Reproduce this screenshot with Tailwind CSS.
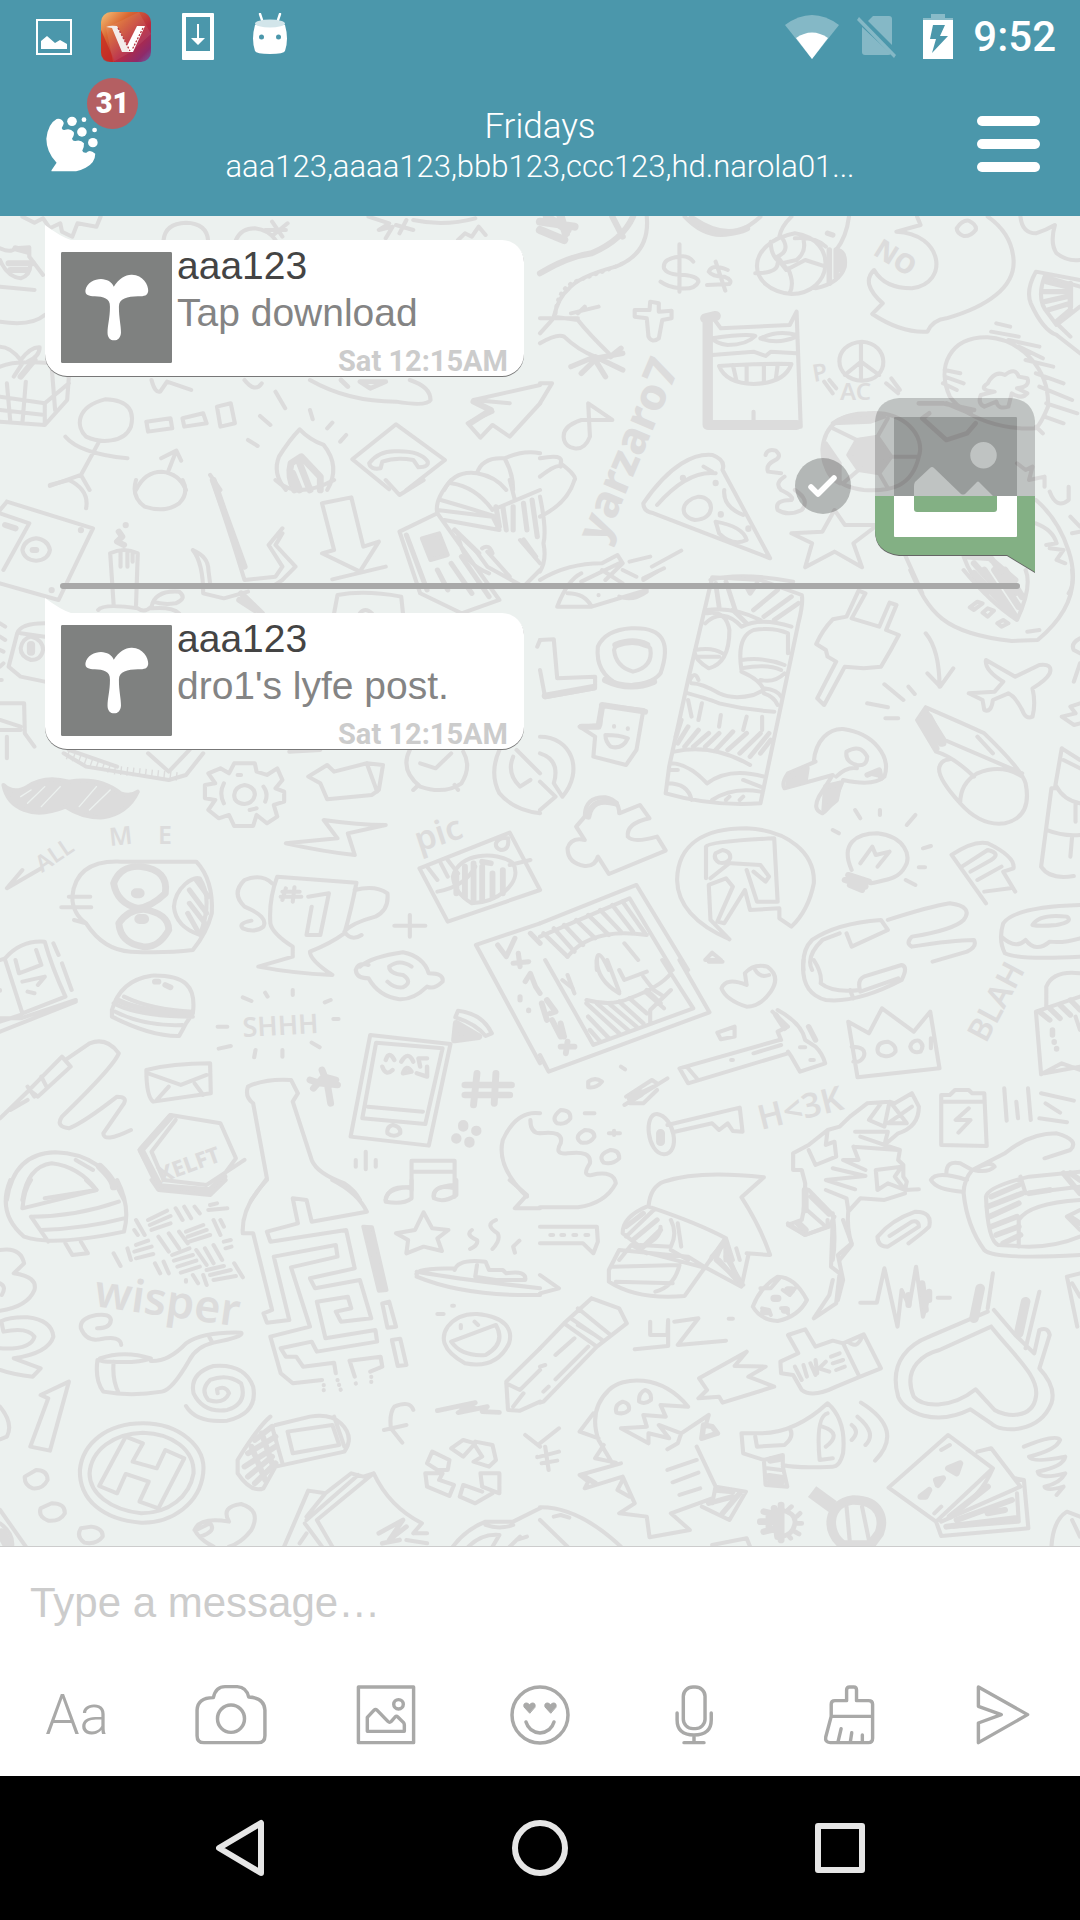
<!DOCTYPE html>
<html lang="en">
<head>
<meta charset="utf-8">
<meta name="viewport" content="width=device-width, initial-scale=1">
<title>Fridays</title>
<script src="https://cdn.jsdelivr.net/npm/@tailwindcss/browser@4"></script>
</head>
<body class="min-h-screen flex flex-col bg-[#ecf1ef] font-['Liberation_Sans',Arial,sans-serif]">

<header class="bg-[#4b97ab] text-white font-['Roboto',sans-serif]">
  <!-- status bar -->
  <div class="h-[72px] pt-0.5 flex items-center justify-between pl-9 pr-6">
    <div class="flex items-center">
      <svg class="w-9 h-9" viewBox="0 0 36 36"><path d="M1 1H35V35H1Z" fill="none" stroke="#fff" stroke-width="2"/><path d="M5 30V22L11 17L19 24L24 21L31 25V30Z" fill="#fff"/></svg>
      <svg class="ml-[29px] w-[50px] h-[50px]" viewBox="0 0 50 50">
        <defs><linearGradient id="vg" x1="0" y1="0" x2="1" y2="1"><stop offset="0" stop-color="#f6c478"/><stop offset=".3" stop-color="#d96732"/><stop offset=".62" stop-color="#b82a40"/><stop offset=".85" stop-color="#8e2a6a"/><stop offset="1" stop-color="#6a5fa5"/></linearGradient></defs>
        <rect width="50" height="50" rx="10" fill="url(#vg)"/>
        <path d="M0 18L14 50H10Q0 50 0 40Z" fill="#c5261e" opacity=".7"/><path d="M5 16L38 0L50 22L30 40L12 50Z" fill="#fff" opacity=".08"/>
        <path d="M5 15Q9 13 16 14L28 36L31 40H21L11 16Z" fill="#f3ecea"/><path d="M36 14H44L32 40H28L26 34Z" fill="#fff"/>
        <path d="M17 16L29 39M42 16L31 38" stroke="#b5343c" stroke-width="1.3" stroke-dasharray="2 1.5"/>
      </svg>
      <svg class="ml-[31px] w-8 h-12" viewBox="0 0 32 48"><path fill-rule="evenodd" d="M1 0H31Q32 0 32 1V46Q32 47 31 47H1Q0 47 0 46V1Q0 0 1 0ZM4 4V38H28V4Z" fill="#fff"/><path d="M15 11H17V25H23L16 32L9 25H15Z" fill="#fff"/></svg>
      <svg class="ml-[39px] mb-1.5 w-[34px] h-[42px]" viewBox="0 0 34 42"><path d="M7 1L10 10M27 1L24 10" stroke="#fff" stroke-width="2.4" stroke-linecap="round"/><path d="M2 12Q3 11 6 11Q17 16 28 11Q31 11 32 12Q36 26 32 38Q31 41 17 41Q3 41 2 38Q-2 26 2 12Z" fill="#fff"/><ellipse cx="17" cy="10.500" rx="15" ry="4" fill="#d2e5ea"/><circle cx="8.500" cy="24" r="2.500" fill="#4b97ab"/><circle cx="25.500" cy="24" r="2.500" fill="#4b97ab"/></svg>
    </div>
    <div class="flex items-center">
      <svg class="w-[54px] h-11" viewBox="0 0 54 44"><path d="M0 10Q27 -10 54 10L27 44Z" fill="#fff" opacity=".32"/><path d="M11 23Q27 12 43 23L27 44Z" fill="#fff"/></svg>
      <svg class="ml-[18px] w-10 h-11" viewBox="0 0 40 44"><g fill="#fff" opacity=".32"><path d="M11 6L16 1H32Q35 1 35 4V30Z"/><path d="M5 12L34 39Q33 40 31 40H8Q5 40 5 37Z"/><path d="M0 5L2 2L39 40L37 43Z"/></g></svg>
      <svg class="ml-[26px] w-[30px] h-[46px]" viewBox="0 0 30 46"><path d="M8 0H22V4H30V7H0V4H8Z" fill="#fff" opacity=".35"/><path fill-rule="evenodd" d="M0 6H30V45H0ZM10 11L7 25H13L9 39L25 22H17L22 11Z" fill="#fff"/></svg>
      <span class="ml-5 text-[42px] leading-none font-medium">9:52</span>
    </div>
  </div>
  <!-- conversation bar -->
  <div class="h-36 flex items-center justify-between pl-[46px] pr-10">
    <a href="#" aria-label="Home, 31 unread" class="relative block w-[57px]">
      <svg class="w-[52px] h-14" viewBox="134 352 152 168" preserveAspectRatio="none"><path fill="#fff" d="M150 515L165 492Q135 460 135 420Q140 375 165 361Q180 358 186 373Q185 380 180 388Q182 396 190 393Q205 388 215 400Q218 408 210 420Q212 428 220 427Q235 422 245 434Q246 445 240 456Q243 464 252 462Q262 450 278 465Q278 492 250 507Q235 515 222 518H150Z"/><g fill="#fff"><circle cx="210" cy="368" r="14"/><circle cx="245" cy="363" r="7"/><circle cx="239" cy="400" r="14"/><circle cx="276" cy="394" r="7"/><circle cx="271" cy="432" r="14"/></g></svg>
      <span class="absolute left-[41px] -top-[38px] size-[51px] rounded-full bg-[#b45f62] flex items-center justify-center text-[29px] leading-none font-black">31</span>
    </a>
    <div class="flex-1 min-w-0 pt-1.5 text-center font-light">
      <h1 class="text-[35px] leading-10 font-light">Fridays</h1>
      <p class="text-[31px] leading-10 truncate">aaa123,aaaa123,bbb123,ccc123,hd.narola01...</p>
    </div>
    <button type="button" aria-label="Menu" class="w-[63px] flex flex-col gap-[13px]">
      <span class="h-2.5 rounded-full bg-white"></span><span class="h-2.5 rounded-full bg-white"></span><span class="h-2.5 rounded-full bg-white"></span>
    </button>
  </div>
</header>

<main class="relative flex-1 overflow-hidden">
  <!-- doodle wallpaper -->
  <svg class="absolute inset-0 w-full h-full" viewBox="0 216 1080 1330" preserveAspectRatio="xMidYMin slice" fill="none" stroke="#dcdcdc" stroke-width="12" stroke-linecap="round" stroke-linejoin="round" aria-hidden="true">
    <g transform="translate(0 210) scale(.3444 .3333)">
      <path d="M65 20L100 38L125 25L145 55L175 40L180 65L210 80L225 40L280 50L292 20M475 90Q480 40 540 38Q600 40 604 90M685 90Q700 55 740 55Q780 60 800 90M790 35L820 80M835 40L790 78M770 60H830M1070 20L1130 40L1100 60L1140 50L1120 85M1150 45L1200 60M1160 70L1180 30M1200 30Q1290 50 1380 25M1330 90L1350 70L1370 80L1390 50L1410 75"/>
      <path d="M0 115Q30 130 45 115L85 112V140L125 195M0 150Q20 200 60 205Q90 195 88 160M0 230L100 240M0 335Q90 350 130 315M0 410Q30 410 60 450Q90 410 115 412Q115 440 80 455M0 470Q40 450 150 460L200 500L195 570L130 645L0 635M20 520L30 635M75 515L65 640M0 560L130 580L200 520M0 600L130 615M150 470L160 600M65 460L40 500M130 580V645"/>
      <path d="M25 160H95M45 115L80 125M30 180H80M100 450L60 500" stroke-width="18"/>
      <path d="M305 568C380 570 390 610 380 650C360 700 290 700 250 680C220 650 220 590 305 568ZM285 700L235 795L145 828M190 680Q230 730 370 745M235 795L260 840M425 635L495 625L500 655L430 665ZM530 625L590 610L600 640L535 650ZM630 590L670 580L682 640L640 650ZM440 510Q450 550 465 545L485 515L555 540M710 510Q740 550 760 520M900 510Q1010 575 1150 575Q1240 590 1250 570Q1250 530 1190 510M800 545L828 595M755 618L785 645M900 600L908 628M965 638L950 655M1005 675L988 695M720 690L748 708"/>
      <path d="M1045 515H1120L1075 535Z M990 510L1010 530" stroke-width="14"/>
      <path d="M830 840Q790 790 810 740Q840 690 870 658Q900 690 940 705Q990 770 950 840M1023 748L1150 643L1292 750L1180 840M1023 748L1130 838M1072 760Q1100 722 1150 724Q1220 722 1242 755Q1245 772 1215 772L1200 750Q1150 740 1110 755L1105 775Q1075 780 1072 760Z"/>
      <path d="M855 840Q835 800 845 760L875 740L930 800V840M870 760L900 840M850 790L870 840" stroke-width="20"/>
      <path d="M395 840Q420 785 470 785Q520 790 540 840M490 780L512 722L468 745M512 722L526 752M610 795L640 840M1568 525L1375 570L1430 605L1358 640L1395 683L1430 645L1480 680L1568 580M1375 570L1480 580M1290 840Q1320 780 1385 790Q1400 740 1465 745Q1520 720 1568 730M1385 790Q1440 800 1470 840M1465 745Q1490 790 1490 840"/>
      <path d="M1375 575L1425 600L1365 640" stroke-width="18"/>
    </g>
    <g transform="translate(540 210) scale(.3444 .3333)">
      <path d="M0 60L70 90M0 35L100 50M20 20L80 60M60 20L75 70" stroke-width="24"/><path d="M0 190Q80 140 150 130Q240 90 270 20M210 20L240 80" stroke-width="18"/>
      <path d="M310 20Q320 130 220 170Q110 200 80 240Q55 260 40 320L110 330Q140 370 200 430M0 325H110M0 400Q50 370 70 380Q110 420 160 440M0 370L35 330M90 310L170 290M130 290L110 310"/>
      <path d="M45 310Q50 240 100 215Q200 180 240 160" stroke-dasharray="2 18"/>
      <path d="M90 470L160 440L240 480M120 490L160 450L190 500M205 440L235 415M160 445L240 430" stroke-width="16"/>
      <path d="M445 155Q430 135 405 140Q355 145 360 175Q370 195 420 195Q460 200 460 215Q450 240 405 235Q370 230 350 215M405 103V245M545 180Q500 160 490 185Q500 200 535 200Q560 210 550 222L485 225M510 155L538 242"/>
      <path d="M420 20Q520 130 640 20" /><path d="M440 25Q530 90 600 55" stroke-width="20"/>
      <path d="M740 70C870 90 850 250 730 252C600 240 590 100 740 70ZM700 80Q730 120 690 140L715 175M760 75Q780 120 745 150L700 160L715 180L770 150L830 170M670 95Q670 140 700 160M690 160Q690 190 625 190M720 175Q740 220 725 250M740 85Q800 80 830 110M695 80Q700 50 730 20M897 20Q890 80 860 120Q890 120 885 170Q870 220 800 235"/>
      <path d="M840 120V220M860 120V200M875 130V180M835 70L850 75" stroke-width="16"/>
      <path d="M320 275L345 280V305L382 302V325L355 330L345 385Q325 400 315 380L310 325L275 320V300L318 300Z"/>
      <path d="M500 320L525 355L725 345L745 305L757 650M500 385Q600 370 625 378Q600 405 545 405Q510 400 500 385ZM640 385Q690 360 745 375M640 385Q690 405 745 380M500 435L620 425L655 438L670 425L745 430M520 468Q640 460 730 462Q710 520 620 522Q540 520 520 468ZM560 465L570 510M600 465V518M650 465V518M690 465L685 505M620 605V645"/>
      <path d="M487 330V645H745M480 325L510 318" stroke-width="30"/>
      <path d="M935 395C1015 400 1020 510 935 512C850 510 845 400 935 395ZM932 400V510M932 455L885 495M932 455L985 495M825 515L850 550M840 510L860 535M1005 520L1040 550M1020 505L1045 540"/>
      <path d="M1035 65L1105 45L1095 20M1035 65C1170 70 1190 220 1080 235Q1000 235 970 180Q930 220 995 280L965 312Q1050 370 1125 365Q1140 330 1180 325C1300 290 1380 230 1375 150Q1370 70 1300 20M1210 55Q1225 30 1245 32Q1270 45 1265 60Q1250 80 1230 78Q1210 70 1210 55ZM1395 20Q1400 70 1440 70Q1470 60 1495 45Q1480 100 1500 130Q1530 155 1568 150M1568 210L1440 185Q1410 240 1425 280Q1460 360 1500 375M1568 230L1465 200Q1440 270 1475 310L1500 345L1568 290M1500 375L1568 430M1505 345L1540 380"/>
      <path d="M1470 215L1530 230M1460 245H1530M1465 275L1530 260M1475 300L1540 280M1500 335L1540 300M1540 220V290" stroke-width="16"/>
      <path d="M1190 560C1150 470 1190 380 1300 382C1400 390 1480 480 1475 590Q1455 640 1440 655C1350 660 1240 630 1190 560ZM1310 365L1390 380M1325 340L1365 350M1360 390L1450 410M1390 410L1460 445M1410 450L1490 470M1440 490L1520 520M1450 530L1545 570M1470 580L1560 610M1465 620L1520 640M1440 650L1460 670M1175 480L1220 490M1175 500L1230 520M1170 520L1210 540M1300 520Q1320 480 1350 495Q1380 470 1390 500L1415 505Q1425 530 1385 535L1415 550Q1400 570 1370 550L1360 590Q1330 600 1325 575L1290 590Q1270 580 1280 555L1320 545Q1270 540 1300 520Z"/>
      <path d="M1100 580H1170L1260 600M1130 610L1110 625L1180 690L1240 670L1265 640M1180 580L1250 610" stroke-width="14"/>
      <path d="M70 690Q60 650 120 630L210 630L140 580L145 680Q130 720 100 715Q75 710 70 690ZM0 520L35 520L0 580"/>
      <path d="M0 745Q70 730 60 760Q110 800 100 810Q80 880 0 920M0 800Q50 760 60 770M0 860Q20 960 10 1000Q20 1050 0 1085"/>
      <path d="M300 880C380 760 450 730 500 735Q540 750 530 780L668 1045L330 910Q300 905 300 880ZM340 885Q430 780 510 790M460 860C510 860 510 930 450 930C400 920 410 870 460 860ZM535 840Q530 890 590 915M510 935Q590 950 600 990Q560 1010 520 970ZM475 770L500 785M655 735Q660 715 685 722Q705 740 680 752Q655 765 662 785L700 790M710 800Q680 820 700 840Q740 860 730 870Q680 870 690 900Q720 920 760 900Q785 870 740 840"/>
      <path d="M415 803V805M510 818V820M525 912V914M605 955V957" stroke-width="18"/>
      <path d="M950 610C1060 600 1120 680 1100 740C1080 830 1020 845 940 840C850 830 820 770 820 720C825 640 880 610 950 610ZM920 690L980 680L1020 740L985 790L925 780L895 735ZM1020 740H1100M980 680L1010 625M985 790L1010 835M920 690L850 655M925 780L880 820"/><path d="M925 690L975 685L1010 740L980 785L930 775L900 735ZM850 640Q900 600 1000 620L960 635Z M825 740Q830 800 870 820V760L830 700Z" fill="#dcdcdc"/>
      <path d="M855 900L885 945H980L910 1000L935 1072L855 1025L770 1072L790 1000L730 970L820 965ZM0 1110Q80 1060 180 1060L225 1035L240 1060L190 1110M230 1060L120 1115M260 1055L320 1040M325 1070L410 1022M300 1105L360 1075M495 1110Q580 1085 735 1115M1060 1035L1110 1150M1230 1040Q1250 1100 1300 1150M1440 870C1530 950 1570 1100 1535 1150M1440 940Q1490 960 1500 1000L1470 1005M1480 1015L1520 1020L1500 1050L1525 1060M1385 760L1410 780L1430 770L1420 810L1465 800V830M1480 845Q1500 900 1535 870V830M1540 920L1568 950M1545 970L1568 965"/>
      <path d="M1240 1040L1310 1045L1380 1150M1260 1060L1330 1140M1300 1040L1380 1110" stroke-width="18"/>
    </g>
    <g transform="translate(0 480) scale(.3444 .3333)">
      <path d="M145 15L200 0Q260 30 250 85M395 0Q380 50 420 80Q480 100 520 70Q550 40 530 0M20 65L270 145L170 360L0 310M20 65L0 90M85 130L10 270M0 100L85 130M105 175Q140 180 145 210Q140 240 105 242Q70 240 65 210Q70 180 105 175ZM320 220Q360 200 400 220L395 375M320 220L330 375M350 215V260M370 215V260M385 220V245M285 390Q300 370 400 385Q420 400 440 380Q450 330 520 335Q545 355 510 370Q470 375 445 365M440 385Q500 380 520 400M615 0Q660 130 710 300L800 290L820 260L780 195L820 145M820 160L800 195L858 260L820 300L790 320M560 210Q605 230 605 270L610 310M560 210Q590 250 590 340L650 355L720 335M800 0Q860 60 970 0M1120 0L1160 45L1230 0"/>
      <path d="M620 0L650 90L710 260" stroke-width="18"/><path d="M345 155L355 170L340 185L360 195M365 135V136M15 135L45 145M95 210H105M700 340L760 400M695 360L740 390M150 330V331M235 150V151" stroke-width="18"/>
      <path d="M935 70L1020 52L1055 200L1100 185L1045 275L935 220L970 210ZM965 298L1120 260M970 400L980 345Q1060 330 1165 350L1170 400M1045 400Q1060 380 1080 400M1310 0Q1260 60 1270 100L1160 155L1220 340L1340 400L1450 360L1270 100M1270 90L1430 110L1450 150L1290 120M1310 10Q1380 20 1430 90L1568 30M1280 60Q1380 90 1440 110M1480 0L1495 60M1380 210L1415 260L1520 320L1568 270M1415 215L1480 290M1400 205Q1420 190 1430 220M1510 180L1568 250M1330 160Q1340 250 1420 280"/>
      <path d="M1225 175L1275 160L1300 225L1250 240Z" fill="#dcdcdc"/>
      <path d="M1440 80L1450 140M1460 80L1470 150M1490 80V150M1520 70L1530 150M1545 60L1560 170M1320 150L1390 220M1180 165L1240 330M1270 270L1300 330M1310 250L1370 340M1340 230L1420 350M1520 180L1555 230" stroke-width="15"/>
      <path d="M130 430Q60 430 50 460L25 560L60 590L130 605M60 460L130 470M90 470Q125 480 125 510Q120 540 90 540Q60 530 60 505Q65 475 90 470ZM0 430L15 440M0 470L15 480M0 510L10 515M0 560L10 550M0 600H5M0 670H70L72 760L100 800M0 750H60M20 770V835M0 720L60 740"/><path d="M90 495V515" stroke-width="24"/>
      <path d="M185 820L250 860L340 875L490 900L540 885L590 820M200 810L340 860M430 820L490 875L550 810" /><path d="M195 825L330 870L520 890" stroke-width="26" stroke-dasharray="4 14" stroke-linecap="butt"/>
      <path d="M10 915Q40 945 80 920Q130 885 200 905Q290 890 350 940Q380 950 400 935Q370 1000 300 1012Q240 1015 190 980Q120 1010 70 990Q20 970 10 915Z" fill="#dcdcdc"/>
      <path d="M60 950L90 930M80 970L130 920M120 980L175 920M230 980L280 920M260 990L320 930" stroke="#ecf1ef" stroke-width="4"/>
      <path d="M680 850H740L745 875L775 885L805 865L820 900L800 925L825 935V965L795 975L805 1010L775 1030L745 1005L735 1038H680L665 1005L635 1015L605 990L625 960L595 955V915L625 910L605 880L640 865L665 880ZM710 915Q740 920 740 945Q735 970 710 972Q680 970 680 945Q682 920 710 915ZM650 910Q635 940 650 970M765 920Q780 940 770 965M725 990L745 985M690 885H700"/>
      <path d="M895 890L950 855L970 875L1065 850L1112 855L1100 930L1080 945L950 958L930 910ZM1065 850L1095 935M840 815L930 810M1190 810Q1160 870 1220 920Q1290 945 1340 910Q1370 860 1345 815M1220 850L1265 865L1310 820M1215 915L1200 930M1320 915L1330 930M1450 810Q1420 880 1450 940Q1490 990 1568 1000M1490 830Q1470 880 1510 920L1540 900M1500 810L1568 880M1568 480L1560 500"/>
    </g>
    <g transform="translate(540 570) scale(.3444 .3333)">
      <path d="M50 110Q80 30 120 10M50 110H150L310 60M80 70Q130 70 150 110M230 80Q270 95 310 65M180 0L240 40M240 0L280 20M300 30L340 5M170 75V76M0 210L40 208L50 325L160 320V355L15 382L0 300M265 175C360 170 380 220 350 310Q320 350 230 345Q160 310 168 230Q190 180 265 175ZM215 240C220 210 300 205 320 235Q330 290 270 305Q220 290 215 240Z"/>
      <path d="M15 378L155 352M190 330Q260 365 330 335M220 225Q270 205 310 225" stroke-width="20"/>
      <path d="M180 405L300 420L280 540L250 585L155 560L160 500L115 470L175 465ZM190 495Q230 495 255 505Q240 540 205 530Q190 515 190 495ZM215 468V470M255 475V477"/><path d="M180 405L305 425M120 470H170L180 410" stroke-width="18"/>
      <path d="M500 22L640 30L760 75Q765 100 750 160L640 700Q500 710 365 670L375 590L430 330ZM485 130Q540 120 550 180Q550 280 490 295Q450 270 450 250M450 240Q500 230 530 250M455 260H520M585 300Q570 200 620 180Q680 170 720 190V250M585 270Q650 260 710 285M585 295Q660 280 700 300M585 305Q640 330 650 360L620 375Q560 390 520 370Q470 340 440 340M435 330Q450 300 460 330M480 160Q530 110 585 170Q640 140 730 170M485 120Q560 110 640 150M430 370Q500 390 520 400Q600 420 680 425M650 355Q690 360 700 380M640 330Q680 340 710 310M650 370Q680 380 690 405M430 390L440 440M470 400L460 450M525 435L520 470M600 440L590 480M645 440V480M390 545Q500 520 610 585M380 580Q430 580 485 640Q550 590 650 620M380 600H400M370 640Q430 640 440 690M500 690Q560 650 640 665M590 630L640 650M540 690L550 680M580 690L590 680"/>
      <path d="M400 520L430 470M420 530L460 480M445 530L490 490M480 530L520 490M510 540L560 485M545 540L600 490M580 550L640 490M610 560L665 490M640 550L670 510M510 40L520 110M540 35L570 130M560 120L600 160M620 120L690 60M650 140L730 80M680 150L750 100M600 50L610 70L630 40M395 500L410 450" stroke-width="14"/>
      <path d="M890 140L925 62L945 70L905 145L985 170L1015 98L1035 105L1005 180L1042 195Q1020 240 990 290L940 295L885 290L825 405L805 385L860 275L835 260L830 240L802 222Q820 180 850 148ZM1120 190Q1160 240 1160 350M1125 310L1162 350L1200 295M1075 0C1130 130 1170 190 1370 213L1445 210Q1560 110 1545 0M1230 0Q1310 100 1385 150Q1430 50 1410 0M1270 95L1285 100L1260 120L1248 112ZM1300 115L1318 122L1300 140L1285 128ZM1345 150L1360 160L1340 170L1328 160ZM1415 185L1450 180"/>
      <path d="M1290 0L1380 140M1320 0L1390 110M1350 0L1400 80M1260 10L1370 130" stroke-width="20"/>
      <path d="M1295 270L1380 320L1450 285Q1490 280 1480 310Q1470 330 1430 355Q1440 400 1430 440Q1410 450 1400 420Q1380 380 1360 370L1315 390Q1310 430 1290 420L1285 390L1245 370L1320 365L1345 335Q1290 300 1295 270ZM1568 205Q1540 220 1550 240L1568 250M1550 335L1568 280M1000 343L1055 390M1070 350L1088 372M950 400L1010 412M1003 445H1040M1568 400L1540 410L1555 430L1515 440L1550 465L1568 460M1120 412L1095 450L1150 545Q1200 560 1260 620M1120 412Q1250 470 1290 490Q1400 600 1410 640Q1430 740 1350 760Q1280 770 1220 700Q1150 620 1160 590Q1165 570 1190 568M1120 420L1175 510L1400 610M1270 500L1315 550M1220 700Q1220 640 1270 610Q1340 580 1400 620"/>
      <path d="M1115 430L1165 520M1105 450L1150 535M1130 440L1170 520" stroke-width="20"/>
      <path d="M795 575C800 510 840 475 880 477C970 490 1020 560 1000 620Q970 650 880 630Q850 710 820 730Q790 720 810 680L850 615L710 655Q700 640 720 610L800 575M890 545Q930 520 950 560Q950 590 920 585Q885 575 890 545ZM860 620Q890 590 920 595M0 500C90 500 130 600 65 680L40 640Q60 570 0 550M0 720L45 680L0 635"/>
      <path d="M725 620L775 595L770 630L720 645ZM830 650L870 640L860 690L825 720ZM950 615L985 600L990 625" stroke-width="16" fill="#dcdcdc"/>
      <path d="M130 740Q130 680 190 682Q230 690 230 730L290 705L318 745Q250 760 255 800Q270 820 340 800L365 842L200 912L168 860Q160 890 130 888Q80 880 80 835Q90 800 130 810L105 770Z"/><path d="M140 740Q150 680 220 700" stroke-width="18"/>
      <path d="M550 1108Q400 1040 398 930C400 820 480 775 600 775C720 780 800 850 795 940Q780 1020 730 1070L695 1045V1015L610 1020L595 960L535 1060L515 1055L560 950L540 925L490 945L495 1050L550 1108M482 925V830Q490 815 680 805L690 995L630 995L600 900M555 880L640 885L665 920L655 935L620 905M530 840Q555 845 552 865Q545 882 520 878Q502 865 510 850Z M495 925L550 880"/>
      <path d="M905 900C870 820 920 790 980 790C1060 800 1080 860 1060 890C1040 930 1000 930 960 940M930 880L965 830L975 855L1015 845L980 890M915 720L930 745M987 720V735M1090 735L1065 765M1135 828L1112 835M1100 892H1118M1062 930L1090 945M850 780L868 790"/><path d="M895 915L955 935M885 930L945 950M900 945L935 960" stroke-width="18"/>
      <path d="M1195 855Q1260 810 1300 820Q1380 860 1375 895L1345 905L1380 965M1195 855L1295 1000M1225 890L1300 840Q1340 850 1310 870L1250 905M1270 930L1340 890M1290 965L1365 955M1515 535L1495 655L1485 655L1455 890Q1480 930 1550 918M1515 535L1568 570M1520 570L1568 595M1500 650Q1520 690 1568 700M1470 780Q1520 800 1568 795M1555 700V755M1545 800L1540 860M0 1060L280 945L430 1200M0 1100L260 985L385 1200M80 1160Q150 1070 310 1095M165 1200Q160 1110 200 1200M245 1120L285 1170"/>
      <path d="M10 1090L80 1160M40 1075L100 1145M70 1065L125 1125M105 1050L160 1105M140 1035L200 1095M175 1020L235 1085M210 1005L270 1085M240 995L305 1090" stroke-width="13"/>
      <path d="M765 1200Q760 1140 790 1110Q860 1060 990 1050L1010 1080L905 1130L890 1090M1010 1050Q1130 1010 1190 1000Q1260 1010 1230 1050Q1200 1080 1080 1100Q1060 1120 1080 1130Q1200 1110 1260 1110Q1270 1130 1240 1145L1140 1175M790 1200Q770 1160 820 1110L870 1090M480 1170L500 1148L525 1170ZM1568 1005Q1380 1010 1345 1060Q1330 1110 1350 1150Q1390 1170 1568 1160M1340 1100Q1380 1140 1410 1110Q1440 1150 1480 1115Q1520 1120 1568 1105M1430 1065Q1450 1030 1530 1040Q1550 1055 1500 1065Q1450 1070 1430 1065Z"/>
    </g>
    <g transform="translate(0 800) scale(.3444 .3333)">
      <path d="M65 210L20 265L120 205M210 290Q220 180 350 185H570Q620 240 615 340Q600 400 560 450Q480 460 380 455Q300 450 250 370M210 290Q210 340 250 370M200 290H262M178 322H265M215 360L250 370M505 320C510 260 560 230 580 235Q620 300 580 405Q510 380 505 320Z"/>
      <path d="M410 200Q490 210 480 280Q440 320 400 325Q340 310 330 250Q350 195 410 200ZM415 328Q490 340 490 390Q460 445 415 440Q350 430 345 370Q370 330 415 328Z" stroke-width="20"/><path d="M395 280H405M405 357H418" stroke-width="30"/><path d="M550 270L600 340M550 310L595 370M545 340L575 395M570 240L605 290" stroke-width="15"/>
      <path d="M830 130L980 115L940 60Q1040 75 1120 75L1010 100L1030 165Q940 155 830 130ZM805 230L1035 248Q1020 330 1000 400Q960 430 900 455Q900 480 965 525Q850 520 750 500L850 470V440Q790 400 785 370Q780 300 805 230ZM790 250Q760 220 710 240Q670 280 710 320Q780 350 765 380Q740 400 705 385Q690 370 730 362M1030 270Q1090 255 1125 280Q1130 330 1090 350Q1020 370 1000 395Q1020 425 1050 405M895 290L955 280L930 405H890L905 320M830 265L820 300M855 262L850 305M820 275H870M815 290H875M1190 345V410M1145 377H1235"/>
      <path d="M1218 205L1480 98L1568 270L1300 365ZM1270 275Q1350 260 1380 200M1480 195L1540 180M1440 130Q1450 110 1475 115Q1480 150 1455 150Q1438 145 1440 130ZM1315 230C1330 160 1440 150 1490 190C1520 250 1440 310 1370 310Q1320 280 1315 230ZM1240 200L1270 240M1280 190L1300 230M1300 180L1330 220"/><path d="M1325 220V280M1350 200V290M1375 190V300M1400 200V300M1430 220V290M1460 210V280M1400 185L1425 190" stroke-width="17"/>
      <path d="M0 480L15 475Q60 420 130 425Q150 500 190 590L65 640L15 480M0 655H60L220 600M0 695L220 605M45 480L55 520L120 495L105 450M65 545L130 530L110 555M155 430L170 465M180 490L208 570M0 665L60 645M80 575L100 580M0 570V572"/>
      <path d="M325 630Q350 540 440 527C540 525 570 560 560 640L540 670Q530 690 520 708Q440 710 325 650ZM360 590Q440 630 560 635M330 610Q400 650 560 650M335 635Q420 680 530 675"/><path d="M450 545H460M480 555L495 562M340 600Q420 640 550 640" stroke-width="17"/>
      <path d="M1045 500Q1080 470 1170 457Q1230 470 1245 520Q1290 520 1285 545Q1260 570 1240 560Q1200 600 1160 598Q1100 590 1070 535Q1035 535 1033 510Q1040 485 1070 495M1195 500Q1160 475 1130 500Q1130 520 1170 525Q1200 545 1170 562Q1145 565 1125 545M705 592L730 603M770 578L777 590M850 570V585M960 600L943 607M968 657H983M632 680H660M670 738L635 746M742 750L738 772M820 750V770M905 728L928 742"/>
      <path d="M1382 435L1568 370M1382 435L1568 790M0 955L85 870L180 770L205 800L110 890L85 870M190 780L260 730Q310 710 345 760Q330 800 180 950Q160 980 200 985Q240 970 340 890Q370 890 360 910L300 1000Q300 1030 380 990M30 930L80 900M120 830L135 860M80 860L100 890"/>
      <path d="M425 810Q500 790 610 790L612 880L445 905Q425 890 425 810ZM430 820L525 855L600 825M455 900L490 860M565 850L590 885"/>
      <path d="M495 945L640 970L685 1075L610 1180L460 1165L405 1050ZM510 960L440 1055L475 1140L600 1155L710 1080"/><path d="M495 950L410 1050L465 1160L610 1172L650 1130" stroke-width="20"/>
      <path d="M735 910Q710 890 720 860Q770 835 845 840L865 880L850 905L905 1080Q920 1120 1000 1150Q1030 1170 1045 1200M735 910L775 1135L730 1200"/>
      <path d="M1075 705L1308 732L1245 1037L1018 1010ZM1092 728L1285 745L1235 972L1052 955ZM1068 920L1228 935M1140 975Q1165 980 1162 1000Q1145 1015 1125 1000Q1122 980 1140 975ZM1330 632Q1400 640 1428 700L1410 708Q1380 670 1322 652ZM1195 1170V1082H1320V1190M1195 1115H1320M1195 1165Q1130 1150 1120 1200M1320 1165Q1260 1150 1260 1190M1033 1080V1100M1062 1055V1108M1091 1080V1100"/>
      <path d="M1120 780Q1130 750 1145 780M1110 800Q1120 830 1140 810M1165 785Q1185 750 1200 785M1170 820Q1180 790 1195 815ZM1240 775H1215L1220 800M1210 820L1240 830V800" stroke-width="13"/>
      <path d="M1325 670L1390 710L1320 720ZM935 810L950 850L960 910M900 840L930 850L980 855M910 865L940 830L975 840M1385 820L1375 915M1440 820L1435 910M1350 855H1485M1350 885H1480" stroke-width="20" fill="#dcdcdc"/>
      <path d="M1345 975V980M1383 992V993M1325 1015V1016M1363 1025V1028" stroke-width="30"/>
      <path d="M1568 940Q1500 930 1460 1020Q1440 1100 1530 1190M1540 960Q1540 1000 1568 1000M20 1200Q40 1060 160 1057Q300 1060 360 1200M65 1200Q80 1100 150 1090Q230 1100 280 1170L130 1195M220 1080L270 1110"/><path d="M290 1100Q330 1140 330 1160" stroke-width="22"/>
      <path d="M1445 435L1470 470L1495 415M1490 490L1535 485M1505 460L1510 500M1540 400L1568 430M1510 590V600M1535 630V632M1525 545L1540 520L1555 560L1568 580" stroke-width="15"/>
    </g>
    <g transform="translate(540 960) scale(.3444 .3333)">
      <path d="M15 0L155 255L445 145L355 0M405 0L492 157L25 335L0 285M135 120Q210 140 260 115Q350 80 380 40M165 0Q165 60 230 100M195 0L230 95M230 30L245 60L310 35M300 50L330 90L360 110M310 100L360 145M380 90L320 150V190M80 45L100 100M65 60L95 85"/>
      <path d="M135 130L230 220M165 130L255 210M200 130L280 200M230 125L300 190M260 115L310 160M140 170L200 235M145 210L175 245M310 90L350 130" stroke-width="13"/>
      <path d="M5 130L20 180M20 120L45 155L30 160M35 180L60 230M60 190L70 230M60 260H100M80 245L75 280" stroke-width="17"/>
      <path d="M600 75L595 40Q620 10 660 20Q700 50 670 95Q640 140 600 140Q540 120 527 85Q540 50 600 75ZM625 30Q640 55 665 45M515 218L565 200V230L525 238ZM765 0Q755 100 830 120Q920 130 1050 60Q1070 20 1050 15L940 50Q920 60 930 95L1040 55M795 0Q820 40 815 70Q850 100 930 90M900 90L910 115M490 5H530M675 155L720 200L690 215L700 240M690 150Q760 190 770 240L800 260Q820 280 828 310L755 335L730 290L720 275M695 240L405 325L430 370L720 280M430 325L455 355M620 280L700 255M555 300H560M755 262H770M785 300H795M895 185L955 220L993 145L1085 215L1133 155L1160 325L922 352ZM980 270Q980 245 1010 245Q1035 255 1032 275Q1020 292 1000 288Q980 285 980 270ZM1075 260Q1080 240 1100 242Q1118 255 1105 275Q1080 282 1075 260ZM905 260Q950 260 940 290Q930 310 910 305M1135 235V265M1470 140V80Q1490 30 1568 40M1568 110L1440 155L1455 343L1515 310L1568 330M1465 340L1568 320M1555 170L1568 210"/>
      <path d="M1450 155L1480 180M1480 145L1510 175M1510 135L1540 165M1540 120L1568 150M1488 210V225M1493 245V247M1500 265V267M685 165L710 205M780 200L800 240" stroke-width="16"/>
      <path d="M60 450Q90 450 88 475Q75 495 50 490Q30 475 60 450ZM130 510Q158 510 158 530Q145 552 120 548Q95 530 130 510ZM205 570Q230 570 230 595Q210 615 185 608Q165 585 205 570ZM140 365Q160 350 180 365Q165 385 140 382ZM235 320L247 328M215 512V525M200 520H232M130 460H158M245 435L370 355M250 410L325 360L340 370M260 430L300 430L340 390M270 410L330 380M340 462C300 460 310 580 360 583C410 580 390 470 340 462ZM370 495L580 443L588 515L560 513L545 490L520 510L500 490L385 517"/>
      <path d="M350 520V545M265 415L290 400" stroke-width="26"/>
      <path d="M0 520Q70 510 60 550Q40 585 80 580Q150 570 145 610Q120 650 150 645Q215 630 220 670Q190 730 110 742H0M0 800H165L168 845L155 880L125 850H0M315 740Q320 680 360 665Q460 630 650 652L585 712Q640 800 668 885L600 880M315 740Q460 790 540 835L495 900M540 835L560 900M570 865L580 900M310 740Q240 770 240 820L290 860Q350 840 350 800M250 830L330 750M290 855L380 860Q400 820 380 780M230 900L265 855L310 880M380 870L430 900M400 790L410 860"/>
      <path d="M250 800L300 760M270 840L340 780M300 860L350 810M500 890L540 845M540 860V900" stroke-width="15"/>
      <path d="M1080 400L1100 440Q1100 500 1040 520L1000 555L1045 570L1040 600L1055 615V650L1065 665L1060 690L1100 688M1060 700L1000 720L930 715L895 755Q890 800 905 855L870 900M1080 400L1030 430L1015 425L950 430L900 470L870 500L835 510L780 555L735 580V630L760 630L770 670M1015 425L1000 500L955 480L990 430M1020 430L1065 490L1010 490L1080 440M915 515H1010L1000 555L930 530M780 570L800 615L860 590L855 545L830 555L835 510M910 560L925 600L880 600L945 630M1040 570L910 560M850 625L945 648L830 660L915 688M975 630L1050 620L1030 650L1060 690L1010 670L980 690ZM830 690L890 715L895 750M770 670Q770 740 760 780L720 795L770 825L840 800L855 770L780 690M850 760Q860 840 850 900M775 750L830 800"/>
      <path d="M770 690V750M790 710L840 760M750 790L770 810" stroke-width="20"/>
      <path d="M1165 405H1190L1205 390H1245L1255 400H1290L1297 558L1165 555ZM1168 425H1285M1245 445L1207 480H1250L1215 518M1348 385L1355 482M1383 425L1388 475M1417 385L1425 480M1455 400L1550 422M1468 430L1510 458M1450 475L1530 487M980 830Q1020 780 1090 755Q1140 755 1130 800Q1110 820 1070 850M980 830Q980 860 1010 860L1100 800Q1100 780 1080 785L1015 828M1225 695Q1150 690 1135 660Q1150 630 1240 660M1180 640Q1180 600 1220 610L1255 630Q1230 660 1230 700Q1240 800 1290 870Q1320 900 1568 885M1255 630L1350 580Q1420 520 1500 520Q1568 540 1540 570L1465 595M1260 630Q1310 600 1320 620Q1300 640 1260 630ZM1568 635L1420 650Q1300 680 1295 710Q1300 840 1330 855L1420 860Q1500 860 1568 830M1390 860V780Q1420 730 1568 720M1395 650L1410 700L1568 680M1568 750L1530 770L1568 810"/>
      <path d="M1310 710L1390 675M1300 740L1400 700M1305 770L1390 730M1310 800L1385 770M1325 825L1390 800M1345 850L1395 825M1420 700L1480 690M1520 640L1568 700M1540 640L1568 660M1545 775L1568 790" stroke-width="17"/>
      <path d="M30 825H38M62 825H70M97 825H105M132 825H140"/>
    </g>
    <g transform="translate(0 1180) scale(.3444 .3333)">
      <path d="M30 0Q-10 100 70 170Q150 200 360 155Q380 80 340 0M65 85L280 30L250 0M65 85Q70 30 90 0M90 110Q220 110 345 65M90 110L140 185M120 150Q250 145 360 115M190 190L210 225L255 220L235 185M440 0L460 30L610 45L655 0"/>
      <path d="M330 220L350 258M370 205L380 240M395 195L430 182M390 215L440 200M395 235L445 222M395 120L420 165M390 150L400 165M430 120L485 92M435 135L495 108M440 150L495 130M510 85L530 120M535 80L555 115M565 80L580 100M605 90L660 85M610 75L630 70M460 170L490 215M490 160L520 205M520 155L545 190M540 155L590 135M545 170L600 150M550 185L610 165M500 225L550 205M505 242L560 225M515 260L570 242M525 278L580 260M570 210L600 255M595 205L620 250M620 195L645 240M650 185L670 180M655 205L672 200M620 120L640 165M640 120L650 140M600 270L650 258M610 285L670 270M620 300L685 288M680 250L705 292M450 250L465 280M475 245L490 280M560 285L575 310M590 285L600 315M540 300V305"/>
      <path d="M0 210Q60 200 70 250L40 280Q110 290 100 330Q80 380 0 392M0 310Q20 320 5 345M0 425Q30 410 80 412Q150 420 155 470Q140 520 40 535L118 565L95 590Q40 585 0 570M0 505Q90 510 100 470Q80 440 10 455L5 430M118 645L200 605L145 812L88 800L140 655ZM0 680Q40 730 20 770L0 778M105 870Q138 870 138 900Q125 928 95 925Q70 915 72 890ZM150 970Q190 970 188 1000Q175 1025 140 1022Q110 1010 118 985ZM265 1040Q300 1045 298 1070Q280 1095 245 1088Q220 1070 235 1045ZM0 990L75 1100M0 1030Q40 1060 35 1100"/><path d="M5 1060L20 1090" stroke-width="30"/>
      <path d="M282 445Q320 445 322 420Q320 400 280 405Q230 415 235 445Q250 485 290 478Q350 465 352 495M290 535Q360 510 438 535Q400 550 320 545Q285 545 290 535ZM438 543Q490 545 540 490Q590 455 700 458Q710 470 620 488Q570 500 550 540Q500 630 470 635Q380 650 300 635Q275 600 283 540M330 545Q325 600 345 640M605 465L615 485M540 678Q570 730 660 722Q750 700 735 620Q710 550 620 558Q550 580 562 640Q590 700 660 690Q720 670 700 610Q660 580 610 600Q580 630 605 660Q650 675 665 640Q655 615 630 628L632 640"/>
      <path d="M415 730C520 730 600 800 590 880C580 970 500 1030 410 1028C300 1020 230 960 232 870C240 790 310 730 415 730ZM415 758C500 760 565 810 562 880C550 950 490 1000 410 1000C320 990 260 940 260 880C265 810 330 760 415 758ZM365 770L415 790L385 845L455 865L480 810L535 835L460 985L405 965L432 905L365 882L340 940L288 918Z"/>
      <path d="M775 0Q700 80 705 160H735L790 390L765 400L775 428L840 420L795 230L975 195L980 230L845 262L900 440L785 470L815 580L850 610L935 600M965 0Q1040 40 1065 95L905 125L890 60L850 55L865 130L775 155L785 185L1005 150L1030 265L900 295L915 325L1045 300L1078 415L990 425L975 395L1020 385L1010 350L920 365L945 475L1090 450L1095 485L920 515L905 485L815 505L830 530L860 530L880 560L970 548L975 580M1030 590L1015 542L1105 530L1110 560L1075 575M1055 140L1080 142L1122 330L1100 332ZM1110 370L1130 365L1150 440L1125 443ZM1138 480L1162 476L1180 555L1155 558Z"/>
      <path d="M940 615V635M980 600L990 632M1033 610L1037 622M1078 590V607" stroke-dasharray="1 14"/><path d="M1068 150L1110 325" stroke-width="18"/>
      <path d="M1195 0V55Q1170 75 1120 65Q1115 25 1195 20M1325 0V45Q1290 70 1260 55Q1250 20 1320 15M1480 0L1530 45L1495 85H1568M1230 97L1255 145L1302 150L1270 175L1283 213L1230 200L1180 220L1185 180L1150 160L1205 150ZM1370 150Q1350 165 1385 180Q1390 195 1365 207M1440 120Q1405 135 1445 160Q1455 180 1430 207M1508 182L1490 200L1495 218M1210 285Q1200 265 1320 265M1210 290Q1350 350 1568 345M1210 275Q1350 300 1568 325M1320 270Q1330 235 1410 245L1420 270H1460L1470 280Q1530 270 1525 300L1440 300L1380 290L1385 255M1385 402C1470 410 1490 450 1478 490C1450 550 1400 560 1350 550C1280 510 1280 470 1300 440Q1330 400 1385 402ZM1310 485L1440 435Q1470 490 1410 525Q1340 530 1310 485ZM1338 435V445M1378 425L1388 435M1313 377H1318M1270 402H1288M1568 505L1470 605L1475 690L1510 692L1568 665M1470 610L1510 630L1568 570M1490 680L1520 640M1200 690Q1190 660 1145 680Q1130 700 1135 745L1168 788M1115 750L1180 735"/>
      <path d="M1270 692L1380 668L1330 698L1415 680L1400 695L1450 697M1340 690L1380 685" stroke-width="14"/>
      <path d="M785 710Q750 740 690 840V880Q730 940 765 925L800 860L1000 815Q1030 770 990 730Q960 700 900 710L800 735M835 755L965 735L985 795L850 820ZM790 740L820 850M970 710L1000 800"/>
      <path d="M740 780L790 740M720 820L800 770M710 860L800 800M720 890L790 830M740 910L800 850M760 760L790 850M730 800L770 900" stroke-width="17"/>
      <path d="M565 1050Q580 1010 665 1025Q640 980 700 972Q760 990 730 1050Q700 1090 665 1100M565 1050Q580 1080 620 1100M570 1050L610 1030Q630 1055 580 1070M825 1100L895 932L945 940L1020 880L1055 890L1085 880Q1130 980 1225 1030L1200 1060M1085 880L920 1020L965 1100M885 1030L935 1100M945 940L890 1010M1040 885L890 1020M870 1090L890 1060M1240 1060H1200M1180 1080L1240 1090"/>
      <path d="M1100 1060L1170 1020L1130 1080L1180 1040M1110 1090L1160 1080" stroke-width="14"/>
      <path d="M1310 805L1345 780L1380 790L1345 830ZM1380 785L1430 795L1440 840L1420 860L1375 845L1400 830L1375 790M1395 880H1450V940L1400 920ZM1430 940L1380 970L1335 950L1345 915L1400 935M1235 880H1285L1275 900L1318 915L1305 948L1240 920ZM1255 815L1305 840L1300 870L1270 870L1240 850ZM1315 1100Q1350 1050 1410 1025H1490L1568 985M1360 1100Q1400 1060 1450 1065L1430 1100M1410 1035Q1450 1050 1490 1035M1500 1080L1530 1070M1525 765L1568 800M1560 830V832M1480 1100L1510 1070"/>
    </g>
    <g transform="translate(540 1220) scale(.3444 .3333)">
      <path d="M0 165L55 205L0 220M230 90L200 150V185Q280 240 420 228L535 60M230 90L430 110L485 145M210 140L405 135Q390 200 335 215M220 185L385 190M300 95L485 145L585 200L605 105M535 60L510 120L590 195M540 90L580 190"/>
      <path d="M520 120L570 180M540 110L585 190" stroke-width="14"/>
      <path d="M150 235L230 265L252 310L165 380L10 545L0 548M150 235L70 310L0 385M70 310L165 380M110 265L205 345M90 295L180 360M110 315L160 345M100 355L45 405M140 380L45 478M10 515L25 500M0 440L15 435M320 305V345H370L372 300V378M370 378L275 388M390 305L460 295L400 375L540 362M548 296H560M600 395L462 475L485 510L460 535L520 530L530 548L680 500L605 470L655 440L565 438ZM690 170Q740 170 775 240Q750 290 690 303Q640 300 618 260Q640 200 690 170ZM640 205L670 205L695 175M705 210L725 225L740 205M645 265L665 270L670 285M700 265L715 265L720 280"/>
      <path d="M680 235H690M650 275H660M710 270H715M720 210H730" stroke-width="22"/>
      <path d="M850 0L845 140L870 160L860 250L795 295L840 225L850 180M880 0L905 70L865 105L880 180L865 240M720 10L770 45L835 20V0M930 248H978L1000 145L1038 320L1050 210L1072 258L1092 140L1112 290L1130 225M1155 233H1190"/><path d="M1110 190L1120 270M1130 215V240M1070 225V255" stroke-width="18"/>
      <path d="M1318 270L1380 345L1435 400L1450 330Q1475 320 1480 345L1450 445Q1500 500 1485 550C1450 640 1340 640 1310 610L1250 568C1150 620 1060 580 1040 530C1010 420 1080 370 1130 350L1300 275M1310 320C1380 410 1450 470 1440 530C1430 600 1350 590 1320 570L1265 508C1190 570 1110 560 1085 530C1050 440 1120 400 1160 390L1310 320M1300 265L1315 160M1410 385L1450 215M1530 170L1560 320M1530 170L1568 160M1545 190L1568 230"/>
      <path d="M1278 205L1260 295M1410 245L1390 340" stroke-width="28"/>
      <path d="M720 345L770 328L800 380L850 362L880 370L940 343L990 445L930 470L860 500Q790 535 760 510L735 465L700 460L698 425L750 400ZM880 370L925 465M895 365Q920 390 935 350M740 440L760 480M765 435L775 470M785 430L800 465M805 460L800 420M830 425L810 445L840 455M845 410L870 400M850 430L880 420M860 450L885 440"/>
      <path d="M430 560C350 460 240 470 200 510Q140 570 170 660L210 730M430 560L350 555L365 590L300 585L310 620L235 625L315 670V640L375 655L345 615L410 640L490 585L480 620M240 545Q262 550 258 570Q245 585 222 578Q215 555 240 545ZM305 510Q325 515 322 540Q305 555 288 545Q285 520 305 510ZM155 580L115 635L170 655M185 675L160 715L220 728M235 730L115 765L140 785L130 805L240 770L275 850L230 880L310 890L318 952L435 930L380 880L500 835M240 780L225 810L260 830M455 680L510 800L598 815L550 900L470 860M510 800L500 850M410 640L400 670L370 688M370 750L455 720M385 787L460 758M405 825L465 805"/>
      <path d="M475 615L500 620L515 640L470 655ZM510 810L560 815M490 850L560 830M530 880L580 820M130 770L160 790" stroke-width="16"/>
      <path d="M0 670L55 625M15 680L25 750M0 710L55 695M5 730L50 722M835 550Q890 600 880 700Q870 740 850 740Q740 745 705 735V705L650 720L590 700L585 640H640Q740 640 835 550ZM835 580Q800 590 812 720L850 715M820 620Q880 640 830 680M625 650L630 680L710 675Q740 650 725 625M905 615Q930 635 905 660M922 590Q980 640 945 675M932 548Q1060 630 973 722M650 720L655 795L718 800L705 740M660 745L700 750"/>
      <path d="M665 770L700 775M670 785H700M670 720L695 715" stroke-width="22"/>
      <path d="M1185 645L1315 745L1150 905L1012 803ZM1270 695L1310 685L1395 800L1165 905M1315 745Q1280 830 1200 880M1380 775L1405 780L1418 925L1165 948L1150 905M1385 820L1390 905L1200 920M1405 680Q1500 640 1510 660Q1500 690 1420 710Q1430 730 1525 710Q1520 740 1445 755Q1450 780 1525 760Q1510 790 1465 800Q1470 815 1520 800L1500 825M1165 690L1190 675M1145 880L1165 860"/>
      <path d="M1185 745L1220 730L1210 760ZM1150 780L1170 775L1155 795ZM1105 830L1130 810L1120 830ZM1190 890L1300 800M1210 900L1370 840M1180 920L1380 895M1300 880L1350 870" stroke-width="18"/>
      <path d="M0 862Q110 860 235 980M0 900L80 980M40 890L60 885L85 893M500 975L600 955L610 980M1485 980Q1490 900 1530 875L1568 890M1545 900L1568 950"/>
      <path d="M700 855V960M640 905H695M650 875L690 885M650 935L690 925M680 865L690 950M665 880V930" stroke-width="20"/><path d="M700 870Q745 880 740 910Q735 945 700 950M720 870L730 860M745 890L755 880M745 910H760M740 935L752 942M720 945L728 955" stroke-width="14"/>
      <path d="M790 815L850 860" stroke-width="40" stroke-linecap="butt"/><path d="M910 840C990 840 1000 900 985 940L960 975H880C830 940 830 850 910 840Z" stroke-width="28"/><path d="M890 860L900 970M935 860L955 960"/>
    </g>
    <g fill="#dcdcdc" stroke="none" font-family="'Noto Sans',sans-serif" font-weight="600">
      <text transform="translate(604 545) rotate(-67)" font-size="44" font-weight="800">yarzaro7</text>
      <text transform="translate(93 1306) rotate(8)" font-size="45">wisper</text>
      <text transform="translate(243 1037) rotate(-3)" font-size="27">SHHH</text>
      <text transform="translate(161 1183) rotate(-20)" font-size="22" font-weight="800">XELFT</text>
      <text transform="translate(986 1044) rotate(-62)" font-size="32">BLAH</text>
      <text transform="translate(761 1130) rotate(-14)" font-size="34">H&lt;3K</text>
      <text transform="translate(872 254) rotate(32)" font-size="27" font-weight="800">NO</text>
      <text transform="translate(42 873) rotate(-34)" font-size="23">ALL</text>
      <text transform="translate(110 846) rotate(-6)" font-size="25">M</text>
      <text transform="translate(158 844)" font-size="25">E</text>
      <text transform="translate(419 852) rotate(-18)" font-size="34">pic</text>
      <text transform="translate(814 382) rotate(-10)" font-size="24">P</text>
      <text transform="translate(840 400)" font-size="24">AC</text>
    </g>
  </svg>

  <!-- messages -->
  <ol class="relative flex flex-col px-[45px] pt-6 pb-6">
    <li class="relative self-start w-[479px] h-[136px] flex gap-[5px] px-4 bg-white rounded-[22px] rounded-tl-none shadow-[0_1px_0_#777]">
      <svg class="absolute left-0 -top-[15px] w-[26px] h-4" viewBox="0 0 26 16" aria-hidden="true"><path d="M0 0Q16 12 26 15V16H0Z" fill="#fff"/></svg>
      <svg class="mt-3 shrink-0 size-[111px]" viewBox="177 126 322 333" preserveAspectRatio="none" role="img" aria-label="Post"><rect x="177" y="126" width="322" height="333" rx="4" fill="#7f8180"/><path fill="#fff" d="M330 230C345 205 365 193 383 194C415 195 431 225 430 243C428 257 420 259 400 259C370 260 345 265 345 290C345 325 351 345 351 368C350 383 342 391 331 391C320 391 312 383 312 368C312 345 319 325 319 290C320 265 300 260 275 259C258 258 246 256 248 240C252 218 275 207 293 207C310 208 325 215 330 230Z"/></svg>
      <div class="flex-1 pt-0.5 text-[39px] leading-[47px]">
        <h2 class="text-[#444]">aaa123</h2>
        <p class="text-[#848484]">Tap download</p>
        <time class="block mt-2.5 text-right font-['Roboto',sans-serif] font-bold text-[29px] leading-[30px] text-[#ccc]">Sat 12:15AM</time>
      </div>
    </li>

    <li class="self-end mt-[22px] flex items-center gap-6">
      <svg class="size-14" viewBox="0 0 56 56" role="img" aria-label="Sent"><circle cx="28" cy="28" r="28" fill="#000" opacity=".24"/><path d="M16 29L23 36L39 20" fill="none" stroke="#fff" stroke-width="5.500" stroke-linecap="round" stroke-linejoin="round"/></svg>
      <svg class="w-40 h-44" viewBox="0 0 160 176" role="img" aria-label="Picture message">
        <path d="M0 98H160V175L132 158H24Q0 155 0 133Z" fill="#666"/>
        <path d="M0 98H160V174L132 157H24Q0 154 0 132Z" fill="#83b084"/>
        <path d="M0 98V23Q2 2 24 0H136Q158 2 160 23V98Z" fill="#000" opacity=".19"/>
        <path fill-rule="evenodd" d="M19 98V20Q19 19 20 19H141Q142 19 142 20V98H118L104 84Q103 83 102 84L90 96Q88 97 86 96L59 70Q57 68 55 70L40 84Q39 86 39 88V98ZM108.500 44A13 13 0 0 0 108.500 70.500A13 13 0 0 0 108.500 44Z" fill="#000" opacity=".2"/>
        <path d="M19 98H142V138Q142 139 141 139H20Q19 139 19 138Z" fill="#fff"/><path d="M39 98H122V111Q122 114 119 114H42Q39 114 39 111Z" fill="#83b084"/>
      </svg>
    </li>

    <li role="separator" class="mx-[15px] mt-[9px] h-1.5 rounded-full bg-[#a9a9a9]"></li>

    <li class="relative self-start mt-6 w-[479px] h-[136px] flex gap-[5px] px-4 bg-white rounded-[22px] rounded-tl-none shadow-[0_1px_0_#777]">
      <svg class="absolute left-0 -top-[15px] w-[26px] h-4" viewBox="0 0 26 16" aria-hidden="true"><path d="M0 0Q16 12 26 15V16H0Z" fill="#fff"/></svg>
      <svg class="mt-3 shrink-0 size-[111px]" viewBox="177 126 322 333" preserveAspectRatio="none" role="img" aria-label="Post"><rect x="177" y="126" width="322" height="333" rx="4" fill="#7f8180"/><path fill="#fff" d="M330 230C345 205 365 193 383 194C415 195 431 225 430 243C428 257 420 259 400 259C370 260 345 265 345 290C345 325 351 345 351 368C350 383 342 391 331 391C320 391 312 383 312 368C312 345 319 325 319 290C320 265 300 260 275 259C258 258 246 256 248 240C252 218 275 207 293 207C310 208 325 215 330 230Z"/></svg>
      <div class="flex-1 pt-0.5 text-[39px] leading-[47px]">
        <h2 class="text-[#444]">aaa123</h2>
        <p class="text-[#848484]">dro1's lyfe post.</p>
        <time class="block mt-2.5 text-right font-['Roboto',sans-serif] font-bold text-[29px] leading-[30px] text-[#ccc]">Sat 12:15AM</time>
      </div>
    </li>
  </ol>
</main>

<form class="bg-white border-t border-[#ccc]">
  <input type="text" aria-label="Message" placeholder="Type a message…" class="block w-full h-28 px-[30px] text-[42px] text-[#444] placeholder:text-[#ccc] placeholder:opacity-100 outline-none">
  <div class="h-[117px] pb-1.5 grid grid-cols-7 items-center justify-items-center text-[#a9a9a8]">
    <button type="button" aria-label="Text style" class="font-['Roboto',sans-serif] font-light text-[55px] leading-[60px]">Aa</button>
    <button type="button" aria-label="Camera"><svg class="w-[72px] h-[60px]" viewBox="568 440 208 180" preserveAspectRatio="none" fill="none" stroke="currentColor" stroke-width="10" stroke-linejoin="round"><path d="M574 515Q576 478 621 478Q628 445 655 445H690Q717 447 723 476Q768 478 770 515V592Q770 613 750 613H594Q574 613 574 592Z"/><ellipse cx="672" cy="541" rx="39" ry="41"/></svg></button>
    <button type="button" aria-label="Gallery"><svg class="size-[60px]" viewBox="1032 440 175 180" preserveAspectRatio="none" fill="none" stroke="currentColor" stroke-width="10" stroke-linejoin="round"><path d="M1039 446H1200V613H1039ZM1065 537L1084 516Q1089 511 1094 516L1125 549Q1130 554 1135 549L1146 536Q1150 532 1154 536L1170 552Q1173 556 1173 560V579H1065Z"/><circle cx="1156" cy="498" r="14"/></svg></button>
    <button type="button" aria-label="Emoji"><svg class="size-[60px]" viewBox="0 0 60 60" fill="none" stroke="currentColor" stroke-width="3.500" stroke-linecap="round"><circle cx="30" cy="30" r="28"/><path d="M16 37Q19 47 30 48Q41 47 44 37"/><path d="M19.500 28L14 22Q13 18 16.500 18Q18.500 18 19.500 20Q20.500 18 22.500 18Q26 18 25 22ZM40.500 28L35 22Q34 18 37.500 18Q39.500 18 40.500 20Q41.500 18 43.500 18Q47 18 46 22Z" fill="currentColor" stroke-width="1"/></svg></button>
    <button type="button" aria-label="Voice"><svg class="w-10 h-[60px]" viewBox="386 440 116 180" preserveAspectRatio="none" fill="none" stroke="currentColor" stroke-width="10" stroke-linecap="round"><rect x="413" y="446" width="63" height="125" rx="28"/><path d="M395 524V545Q395 590 444 590Q494 590 494 545V524M444 592V612M415 613H473"/></svg></button>
    <button type="button" aria-label="Clear"><svg class="w-[52px] h-[60px]" viewBox="817 440 152 180" preserveAspectRatio="none" fill="none" stroke="currentColor" stroke-width="10" stroke-linecap="round" stroke-linejoin="round"><path d="M841 534V498Q841 487 852 487H886V455Q886 446 895 446H907Q915 446 915 455V487H950Q962 487 962 498V600Q962 613 950 613H838Q822 612 825 596L841 534H962M870 571L861 610M901 583L897 610M932 590V610"/></svg></button>
    <button type="submit" aria-label="Send"><svg class="w-[54px] h-[60px]" viewBox="1264 440 158 180" preserveAspectRatio="none" fill="none" stroke="currentColor" stroke-width="10" stroke-linejoin="round"><path d="M1271 446L1415 529L1271 613V554L1338 529L1271 504Z"/></svg></button>
  </div>
</form>

<nav class="bg-black h-36 px-[90px] grid grid-cols-3 items-center justify-items-center" aria-label="System">
  <button type="button" aria-label="Back"><svg class="w-12 h-[58px]" viewBox="0 0 48 58" fill="none" stroke="#e6e6e6" stroke-width="6" stroke-linejoin="round"><path d="M45 4V54L3 29Z"/></svg></button>
  <button type="button" aria-label="Home"><svg class="size-[58px]" viewBox="0 0 58 58" fill="none" stroke="#e6e6e6" stroke-width="6"><circle cx="29" cy="29" r="25"/></svg></button>
  <button type="button" aria-label="Recent apps"><svg class="size-[50px]" viewBox="0 0 50 50" fill="none" stroke="#e6e6e6" stroke-width="6" stroke-linejoin="round"><path d="M3 3H47V47H3Z"/></svg></button>
</nav>
</body>
</html>
